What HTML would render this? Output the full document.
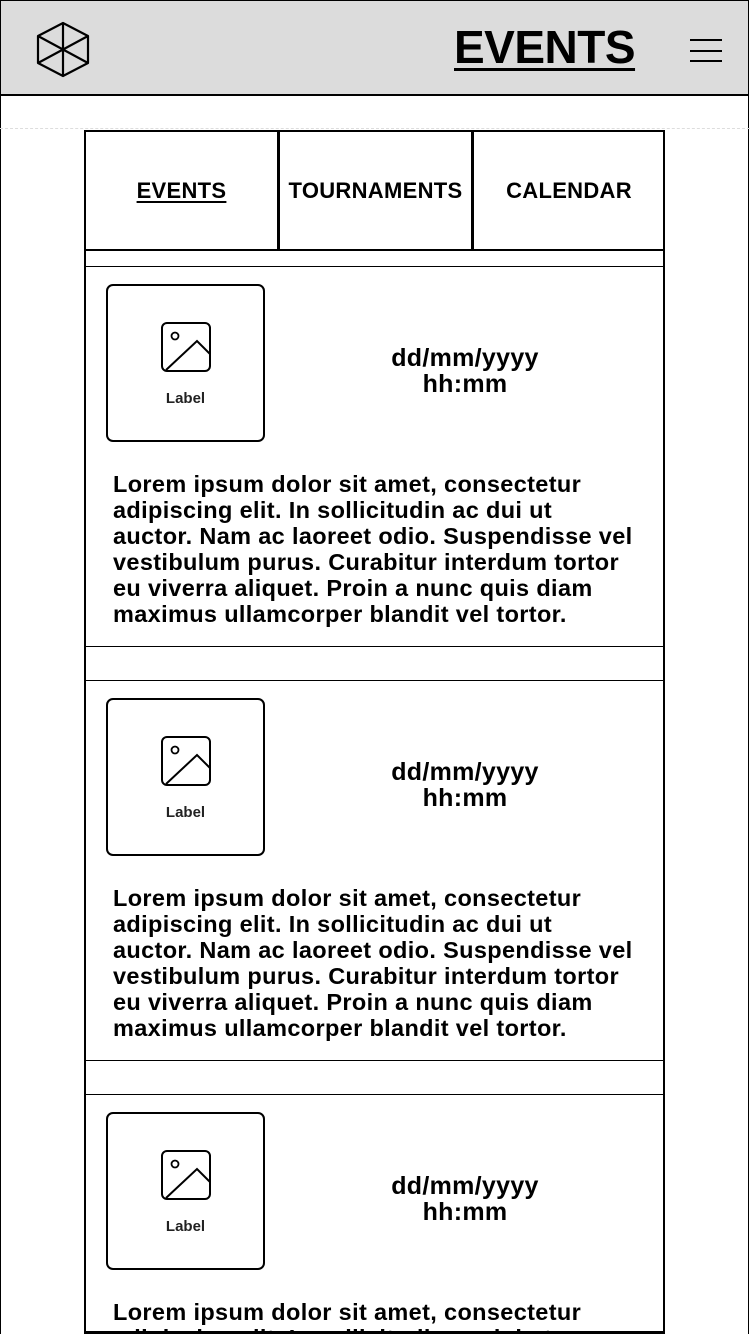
<!DOCTYPE html>
<html><head><meta charset="utf-8"><style>
*{margin:0;padding:0;box-sizing:border-box}
html,body{width:750px;height:1334px;overflow:hidden}
body{position:relative;background:#fff;font-family:"Liberation Sans",sans-serif;color:#000}
.a{position:absolute}
.frame{left:0;top:0;width:749px;height:1334px;border:1px solid #000;border-bottom:none}
.hdr{left:0;top:0;width:749px;height:96px;background:#dcdcdc;border:1px solid #000;border-bottom:2px solid #000}
.title{left:454px;top:20px;font-size:46px;font-weight:bold;text-decoration:underline;text-decoration-thickness:3px;text-underline-offset:5px;letter-spacing:-0.5px}
.dash{left:0;top:128px;width:750px;border-top:1px dashed #ddd}
.cont{left:84px;top:130px;width:581px;height:1204px;border:2px solid #000;border-bottom:none}
.tab{top:0;height:118px;font-size:22px;font-weight:bold;display:flex;align-items:center;justify-content:center;letter-spacing:0.3px}
.hl{left:84px;width:581px;border-top:1px solid #000}
.img{left:106px;width:159px;height:158px;border:2px solid #000;border-radius:7px}
.lbl{left:0;width:155px;top:104px;text-align:center;font-size:15px;font-weight:bold;color:#222}
.date{left:340px;width:250px;text-align:center;font-size:25px;font-weight:bold;line-height:26px;letter-spacing:0.3px}
.p{left:113px;font-size:23.5px;font-weight:bold;line-height:26px;white-space:nowrap;letter-spacing:0.35px}
.clip{left:0;top:0;width:750px;height:1332px;overflow:hidden}
</style></head><body>
<div class="a frame"></div>
<div class="a hdr"></div>
<svg class="a" style="left:30px;top:15px" width="66" height="70" viewBox="30 15 66 70"><g fill="none" stroke="#000" stroke-width="2.2" stroke-linejoin="round"><path d="M63 23 L88 36 L88 63 L63 76 L38 63 L38 36 Z M63 23 L63 76 M38 36 L88 63 M38 63 L88 36"/></g></svg>
<div class="a title">EVENTS</div>
<div class="a" style="left:690px;top:39px;width:32px;height:2px;background:#000"></div>
<div class="a" style="left:690px;top:50px;width:32px;height:2px;background:#000"></div>
<div class="a" style="left:690px;top:60px;width:32px;height:2px;background:#000"></div>
<div class="a dash"></div>
<div class="a clip">
<div class="a cont">
 <div class="a tab" style="left:0;width:191px"><span style="text-decoration:underline;text-underline-offset:3px">EVENTS</span></div>
 <div class="a" style="left:191px;top:0;width:3px;height:118px;background:#000"></div>
 <div class="a tab" style="left:192px;width:195px">TOURNAMENTS</div>
 <div class="a" style="left:385px;top:0;width:3px;height:118px;background:#000"></div>
 <div class="a tab" style="left:388px;width:190px">CALENDAR</div>
 <div class="a" style="left:0;top:117px;width:578px;height:2px;background:#000"></div>
</div>
<div class="a hl" style="top:266px"></div>
<div class="a hl" style="top:646px"></div>
<div class="a hl" style="top:680px"></div>
<div class="a hl" style="top:1060px"></div>
<div class="a hl" style="top:1094px"></div>

<div class="a img" style="top:284px"><svg class="a" style="left:52px;top:35px" width="52" height="52" viewBox="0 0 52 52"><rect x="2" y="2" width="48" height="48" rx="5" fill="none" stroke="#000" stroke-width="2"/><circle cx="15" cy="15" r="3.5" fill="none" stroke="#000" stroke-width="1.8"/><path d="M6 49 L37 20 L50 33" fill="none" stroke="#000" stroke-width="2"/></svg><div class="a lbl">Label</div></div>
<div class="a date" style="top:345px">dd/mm/yyyy<br>hh:mm</div>
<div class="a p" style="top:471px">Lorem ipsum dolor sit amet, consectetur<br>adipiscing elit. In sollicitudin ac dui ut<br>auctor. Nam ac laoreet odio. Suspendisse vel<br>vestibulum purus. Curabitur interdum tortor<br>eu viverra aliquet. Proin a nunc quis diam<br>maximus ullamcorper blandit vel tortor.</div>

<div class="a img" style="top:698px"><svg class="a" style="left:52px;top:35px" width="52" height="52" viewBox="0 0 52 52"><rect x="2" y="2" width="48" height="48" rx="5" fill="none" stroke="#000" stroke-width="2"/><circle cx="15" cy="15" r="3.5" fill="none" stroke="#000" stroke-width="1.8"/><path d="M6 49 L37 20 L50 33" fill="none" stroke="#000" stroke-width="2"/></svg><div class="a lbl">Label</div></div>
<div class="a date" style="top:759px">dd/mm/yyyy<br>hh:mm</div>
<div class="a p" style="top:885px">Lorem ipsum dolor sit amet, consectetur<br>adipiscing elit. In sollicitudin ac dui ut<br>auctor. Nam ac laoreet odio. Suspendisse vel<br>vestibulum purus. Curabitur interdum tortor<br>eu viverra aliquet. Proin a nunc quis diam<br>maximus ullamcorper blandit vel tortor.</div>

<div class="a img" style="top:1112px"><svg class="a" style="left:52px;top:35px" width="52" height="52" viewBox="0 0 52 52"><rect x="2" y="2" width="48" height="48" rx="5" fill="none" stroke="#000" stroke-width="2"/><circle cx="15" cy="15" r="3.5" fill="none" stroke="#000" stroke-width="1.8"/><path d="M6 49 L37 20 L50 33" fill="none" stroke="#000" stroke-width="2"/></svg><div class="a lbl">Label</div></div>
<div class="a date" style="top:1173px">dd/mm/yyyy<br>hh:mm</div>
<div class="a p" style="top:1299px">Lorem ipsum dolor sit amet, consectetur<br>adipiscing elit. In sollicitudin ac dui ut</div>
</div>
<div class="a" style="left:84px;top:1331px;width:581px;height:3px;background:#000"></div>
</body></html>
